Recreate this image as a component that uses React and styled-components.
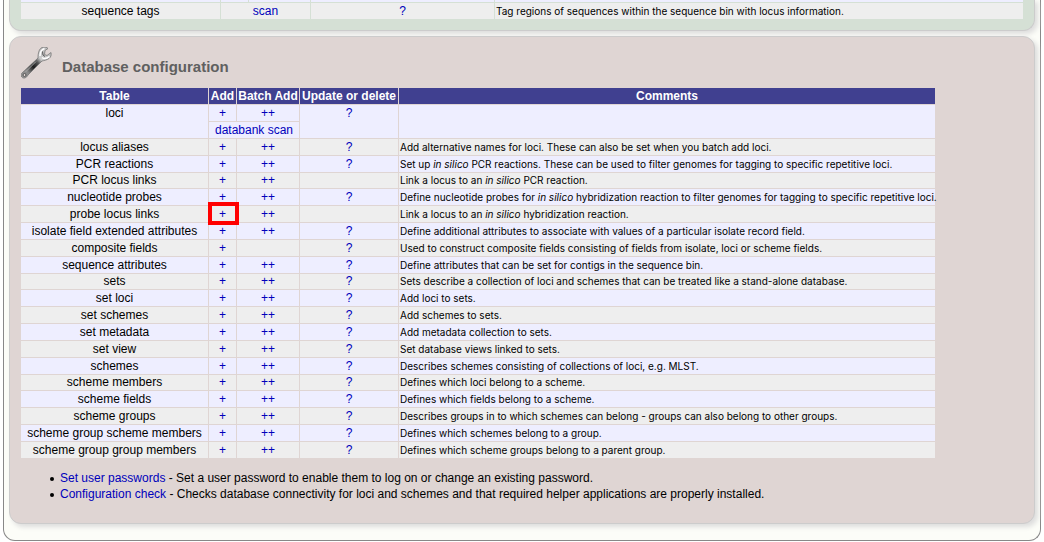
import React from "react";
import styled, { createGlobalStyle } from "styled-components";

const GlobalStyle = createGlobalStyle`
  * { box-sizing: border-box; }
  body {
    margin: 0;
    background: #fff;
    color: #000;
    font: 12px/16px "Liberation Sans", Arial, sans-serif;
    overflow-x: hidden;
  }
`;

const Page = styled.main`
  margin: 0 3px;
  padding: 0 5px 16px 5px;
  background: #fcfdf8;
  border: 1px solid #888;
  border-top: 0;
  border-radius: 0 0 12px 12px;
`;

const Panel = styled.section`
  background: ${(p) => p.$color};
  border: 1px solid #ccc;
  border-radius: ${(p) => (p.$continued ? "0 0 12px 12px" : "12px")};
  border-top-width: ${(p) => (p.$continued ? "0" : "1px")};
  padding: ${(p) => (p.$continued ? "0 11px 11px" : "10px 11px 21px")};
  margin-bottom: ${(p) => (p.$continued ? "5px" : "0")};
  box-shadow: 3px 3px 5px #ddd;
`;

const PanelHeader = styled.header`
  display: flex;
  align-items: flex-start;
  gap: 9px;
  height: 41px;
`;

const Title = styled.h2`
  margin: 12px 0 0;
  font-size: 15px;
  line-height: 16px;
  color: #606060;
`;

const Table = styled.table`
  border-collapse: separate;
  border-spacing: 1px;
  margin: -1px;
  table-layout: fixed;
  width: ${(p) => p.$width};
`;

const Col = styled.col`
  width: ${(p) => p.$w};
`;

const HeadCell = styled.th`
  height: 16px;
  padding: 0;
  background: #404090;
  color: #fff;
  line-height: 16px;
  white-space: nowrap;
`;

const Row = styled.tr`
  & > td {
    background: ${(p) => (p.$shaded ? "#eeeeee" : "#eeeeff")};
    height: ${(p) => (p.$short ? "15px" : "16px")};
    line-height: ${(p) => (p.$short ? "15px" : "16px")};
  }
`;

const Cell = styled.td`
  padding: 0;
  text-align: center;
  vertical-align: top;
  white-space: nowrap;
`;

const Comment = styled(Cell)`
  padding-left: 1px;
  text-align: left;
  font-family: Inter, "Liberation Sans", Arial, sans-serif;
  font-size: 10px;
`;

const TopSliver = styled.td`
  height: 2px;
  padding: 0;
  background: #eeeeff;
`;

const Link = styled.a`
  color: #0000bb;
  text-decoration: none;
`;

const MarkedCell = styled(Cell)`
  position: relative;
  &::after {
    content: "";
    position: absolute;
    inset: -4px -3px -3px -1px;
    border: 4px solid #f00;
  }
`;

const Notes = styled.ul`
  margin: 12px 0 0;
  padding-left: 29px;
  list-style: none;
`;

const Note = styled.li`
  display: flex;
  gap: 6px;
  &::before {
    content: "";
    flex: none;
    width: 4px;
    height: 4px;
    margin-top: 7px;
    border-radius: 50%;
    background: #000;
  }
`;

const silico = <i>in silico</i>;

const ROWS = [
  ["locus aliases", 1, 1, "Add alternative names for loci. These can also be set when you batch add loci."],
  ["PCR reactions", 1, 1, <>Set up {silico} PCR reactions. These can be used to filter genomes for tagging to specific repetitive loci.</>],
  ["PCR locus links", 1, 0, <>Link a locus to an {silico} PCR reaction.</>],
  ["nucleotide probes", 1, 1, <>Define nucleotide probes for {silico} hybridization reaction to filter genomes for tagging to specific repetitive loci.</>],
  ["probe locus links", 1, 0, <>Link a locus to an {silico} hybridization reaction.</>],
  ["isolate field extended attributes", 1, 1, "Define additional attributes to associate with values of a particular isolate record field."],
  ["composite fields", 0, 1, "Used to construct composite fields consisting of fields from isolate, loci or scheme fields."],
  ["sequence attributes", 1, 1, "Define attributes that can be set for contigs in the sequence bin."],
  ["sets", 1, 1, "Sets describe a collection of loci and schemes that can be treated like a stand-alone database."],
  ["set loci", 1, 1, "Add loci to sets."],
  ["set schemes", 1, 1, "Add schemes to sets."],
  ["set metadata", 1, 1, "Add metadata collection to sets."],
  ["set view", 1, 1, "Set database views linked to sets."],
  ["schemes", 1, 1, "Describes schemes consisting of collections of loci, e.g. MLST."],
  ["scheme members", 1, 1, "Defines which loci belong to a scheme."],
  ["scheme fields", 1, 1, "Defines which fields belong to a scheme."],
  ["scheme groups", 1, 1, "Describes groups in to which schemes can belong - groups can also belong to other groups."],
  ["scheme group scheme members", 1, 1, "Defines which schemes belong to a group."],
  ["scheme group group members", 1, 1, "Defines which scheme groups belong to a parent group."],
];

function Wrench() {
  return (
    <svg width="32" height="32" viewBox="0 0 32 32" aria-hidden="true">
      <defs>
        <linearGradient id="steel" gradientUnits="userSpaceOnUse" x1="1" y1="30" x2="28" y2="3">
          <stop offset="0" stopColor="#999" />
          <stop offset=".2" stopColor="#888" />
          <stop offset=".4" stopColor="#1c1c1c" />
          <stop offset=".56" stopColor="#555" />
          <stop offset=".68" stopColor="#ccc" />
          <stop offset="1" stopColor="#bbb" />
        </linearGradient>
      </defs>
      <path
        d="M1 26 L17 11 C17 6 18 2 21 .5 C23 -.3 26 0 27 1.500 L24 3.500 L23.500 7.500 L26 8.500 L30 5.500 C30.500 8 30 10 28 11.500 C26 13 23 13.500 21 14 L7 28 C5.500 31 2.500 32 .8 30 C-.2 28.500 0 27 1 26Z"
        fill="url(#steel)" stroke="#777" strokeWidth=".8"
      />
      <path d="M4.500 25 15 14.500" stroke="#aaa" strokeWidth="1" />
      <path d="M19 9C19 5 20.500 2.500 23.500 1.500M21 10.500C23 12 26 11.500 28.500 9.500" stroke="#fff" strokeWidth="1.500" fill="none" />
      <path d="M21.500 4.500 22 8 24 9.500" stroke="#555" strokeWidth="1" fill="none" />
      <circle cx="3.500" cy="28" r="1.500" fill="#ded5d3" stroke="#555" />
    </svg>
  );
}

const A = ({ children }) => <Link href="#">{children}</Link>;

export default function App() {
  return (
    <>
      <GlobalStyle />
      <Page>
        <Panel $color="#d5e0d5" $continued>
          <Table $width="calc(100% + 2px)">
            <colgroup>
              <Col $w="199px" /><Col $w="27px" /><Col $w="61px" /><Col $w="183px" /><Col />
            </colgroup>
            <tbody>
              <tr>
                {[0, 1, 2, 3, 4].map((i) => <TopSliver key={i} />)}
              </tr>
              <Row $shaded>
                <Cell>sequence tags</Cell>
                <Cell colSpan={2}><A>scan</A></Cell>
                <Cell><A>?</A></Cell>
                <Comment>Tag regions of sequences within the sequence bin with locus information.</Comment>
              </Row>
            </tbody>
          </Table>
        </Panel>

        <Panel $color="#dfd5d3">
          <PanelHeader>
            <Wrench />
            <Title>Database configuration</Title>
          </PanelHeader>
          <Table $width="916px">
            <colgroup>
              <Col $w="187px" /><Col $w="27px" /><Col $w="62px" /><Col $w="98px" /><Col />
            </colgroup>
            <thead>
              <tr>
                {["Table", "Add", "Batch Add", "Update or delete", "Comments"].map((t) => (
                  <HeadCell key={t} scope="col">{t}</HeadCell>
                ))}
              </tr>
            </thead>
            <tbody>
              <Row>
                <Cell rowSpan={2}>loci</Cell>
                <Cell><A>+</A></Cell>
                <Cell><A>++</A></Cell>
                <Cell rowSpan={2}><A>?</A></Cell>
                <Comment rowSpan={2} />
              </Row>
              <Row>
                <Cell colSpan={2}><A>databank scan</A></Cell>
              </Row>
              {ROWS.map(([name, batch, update, comment], i) => {
                const AddCell = name === "probe locus links" ? MarkedCell : Cell;
                return (
                  <Row key={name} $shaded={i % 2 === 0} $short={i % 6 === 2}>
                    <Cell>{name}</Cell>
                    <AddCell><A>+</A></AddCell>
                    <Cell>{batch ? <A>++</A> : null}</Cell>
                    <Cell>{update ? <A>?</A> : null}</Cell>
                    <Comment>{comment}</Comment>
                  </Row>
                );
              })}
            </tbody>
          </Table>
          <Notes>
            <Note><span><A>Set user passwords</A> - Set a user password to enable them to log on or change an existing password.</span></Note>
            <Note><span><A>Configuration check</A> - Checks database connectivity for loci and schemes and that required helper applications are properly installed.</span></Note>
          </Notes>
        </Panel>
      </Page>
    </>
  );
}
